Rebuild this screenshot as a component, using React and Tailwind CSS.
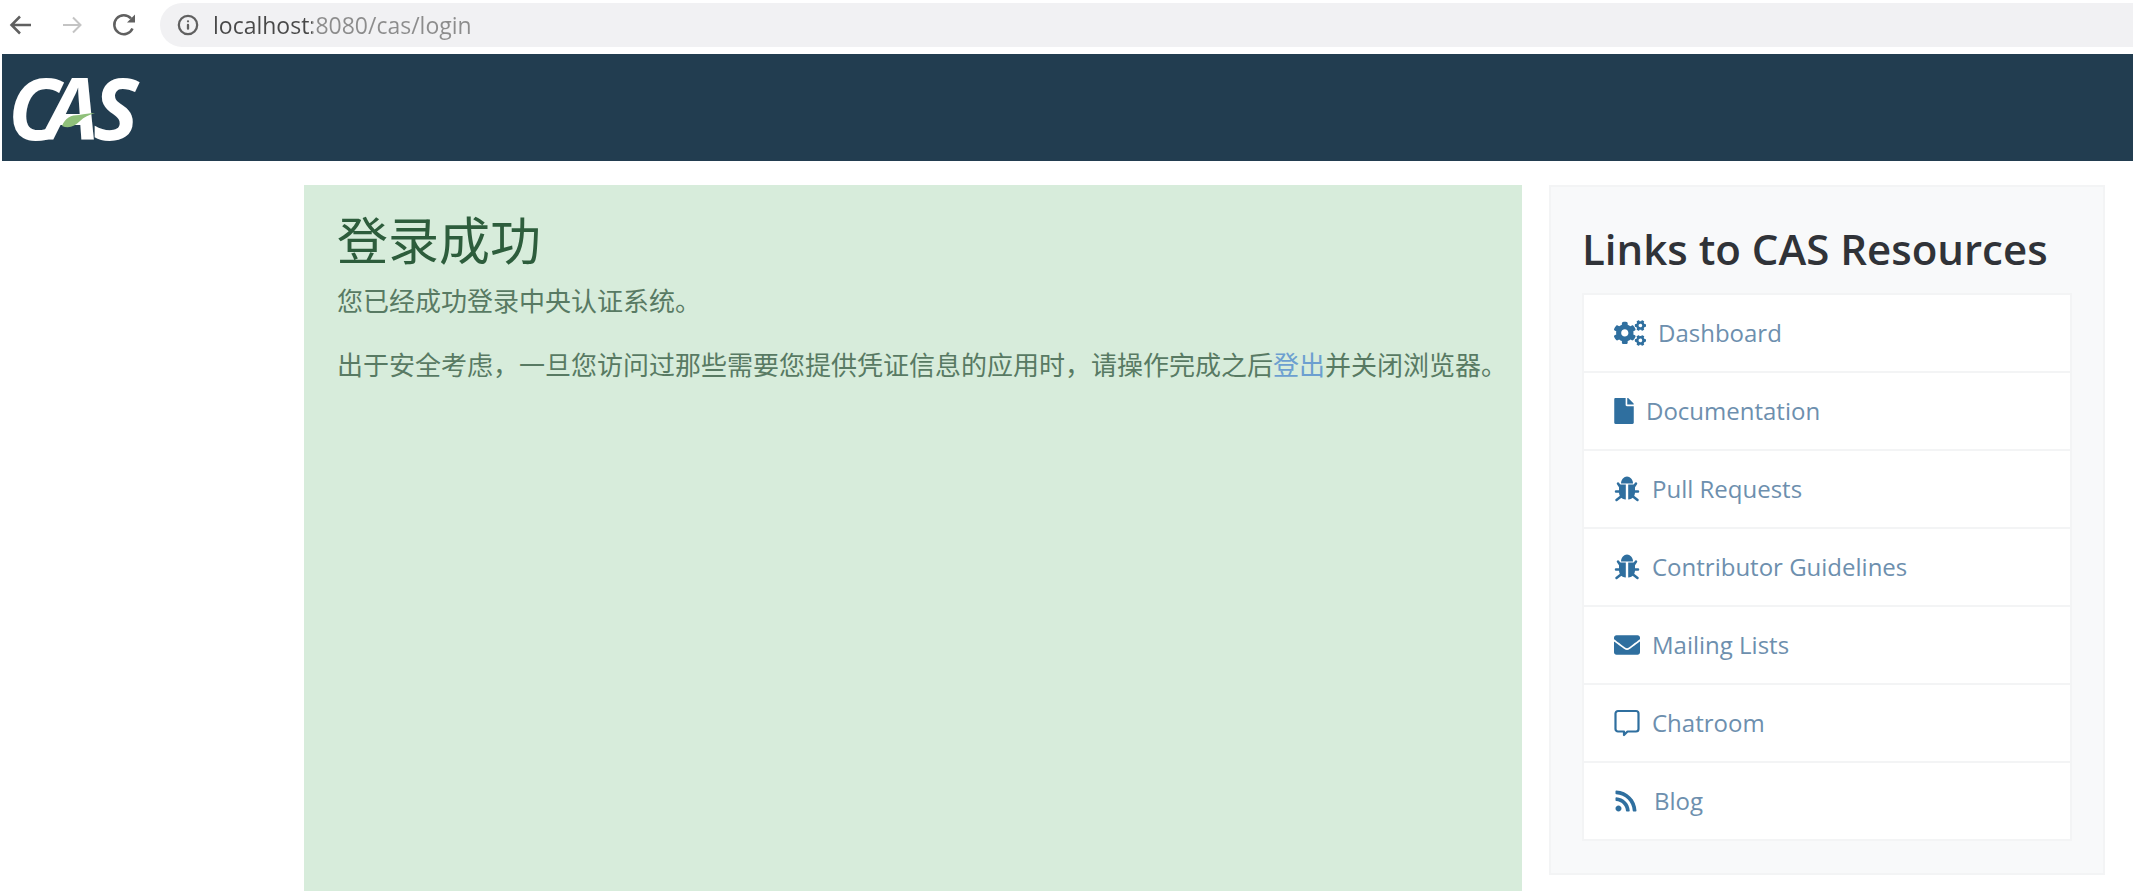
import { FaCogs, FaFile, FaEnvelope, FaRss } from "react-icons/fa";
import { Info } from "lucide-react";

function BugIcon({ className }) {
  return (
    <svg viewBox="0 0 26 26" className={className} aria-hidden="true">
      <path d="M7 7.500C7 3.500 10 0.500 13 0.500s6 3 6 7z" fill="currentColor" />
      <path d="M5 8.500H11.800v15C7 23 5 20 5 16zM14.200 8.500H21V16c0 4-2 7-6.800 7.500z" fill="currentColor" />
      <g fill="none" stroke="currentColor" strokeWidth="2.500" strokeLinecap="round">
        <path d="M6 10.500 4 7.500M20 10.500 22 7.500M6 15.500H2M20 15.500h4M7 20.500l-4.500 3.500M19 20.500l4.500 3.500" />
      </g>
    </svg>
  );
}

function ChatIcon({ className }) {
  return (
    <svg viewBox="0 0 26 28" className={className} aria-hidden="true">
      <path
        d="M4 2h18a2.500 2.500 0 0 1 2.500 2.500V20a2.500 2.500 0 0 1-2.500 2.500h-8.500L10 26v-3.500H4A2.500 2.500 0 0 1 1.500 20V4.500A2.500 2.500 0 0 1 4 2z"
        fill="none"
        stroke="currentColor"
        strokeWidth="2.200"
        strokeLinejoin="round"
      />
    </svg>
  );
}

const links = [
  { label: "Dashboard", Icon: FaCogs, size: "h-8 w-8", gap: "gap-3" },
  { label: "Documentation", Icon: FaFile, size: "h-[26px] w-5", gap: "gap-3" },
  { label: "Pull Requests", Icon: BugIcon, size: "h-[26px] w-[26px]", gap: "gap-3" },
  { label: "Contributor Guidelines", Icon: BugIcon, size: "h-[26px] w-[26px]", gap: "gap-3" },
  { label: "Mailing Lists", Icon: FaEnvelope, size: "h-[26px] w-[26px]", gap: "gap-3" },
  { label: "Chatroom", Icon: ChatIcon, size: "h-7 w-[26px]", gap: "gap-3" },
  { label: "Blog", Icon: FaRss, size: "h-6 w-6", gap: "gap-4" },
];

function BrowserBar() {
  return (
    <div className="flex h-[54px] items-center bg-white pb-1 pl-2 text-[#606060]">
      <button type="button" aria-label="Back" className="flex w-[52px] shrink-0 justify-start">
        <svg viewBox="0 0 24 24" className="h-6 w-6" fill="none" stroke="currentColor" strokeWidth="2.500">
          <path d="M23 12H4M12 3.500 3.500 12l8.500 8.500" />
        </svg>
      </button>
      <button type="button" aria-label="Forward" className="flex w-[52px] shrink-0 justify-start text-[#c4c4c4]">
        <svg viewBox="0 0 24 24" className="h-6 w-6" fill="none" stroke="currentColor" strokeWidth="2">
          <path d="M3 12h17M13 4.500l7.500 7.500-7.500 7.500" />
        </svg>
      </button>
      <button type="button" aria-label="Reload" className="flex w-12 shrink-0 justify-start">
        <svg viewBox="0 0 24 24" className="h-6 w-6" fill="none" stroke="currentColor" strokeWidth="2.500">
          <path d="M20.500 15.500A9.500 9.500 0 1 1 19 5.500" />
          <path d="M23 1.500v8h-8z" fill="currentColor" stroke="none" />
        </svg>
      </button>
      <div className="flex h-11 flex-1 items-center gap-[14px] rounded-l-full bg-[#f1f1f3] pl-[17px]">
        <Info className="h-[22px] w-[22px] shrink-0" strokeWidth={2.5} aria-hidden="true" />
        <input
          type="text"
          aria-label="Address"
          defaultValue="localhost:8080/cas/login"
          className="min-w-0 flex-1 bg-[linear-gradient(90deg,#484848_99px,#8c8c8c_99px)] bg-clip-text font-['Open_Sans',sans-serif] text-[23px] text-transparent outline-none"
        />
      </div>
    </div>
  );
}

function Logo() {
  return (
    <svg viewBox="0 0 150 107" className="h-[107px] w-[150px]" role="img" aria-label="CAS">
      <text
        x="-2 35 83"
        y="86"
        fill="#fff"
        fontFamily="'Open Sans', sans-serif"
        fontSize="86"
        fontWeight="700"
        fontStyle="italic"
      >
        CAS
      </text>
      <path d="M52 72c3-8 9-11 17-11 6-1 10-2 16-2-6 2-11 4-15 8-5 5-11 8-18 5z" fill="#8fc07a" />
    </svg>
  );
}

export default function App() {
  return (
    <div className="flex min-h-screen flex-col bg-white font-['Open_Sans','Noto_Sans_CJK_SC',sans-serif]">
      <BrowserBar />
      <header className="ml-0.5 flex h-[107px] items-center bg-[#223d50] pl-2">
        <Logo />
      </header>
      <main className="flex flex-1 items-stretch gap-[27px] pt-6 pr-7 pl-[304px]">
        <section className="flex-1 bg-[#d7ecdb] pt-[22px] pl-[33px] font-['Noto_Sans_CJK_SC',sans-serif] text-[#587a63]">
          <h1 className="text-[51px] leading-[62px] text-[#2d5d3c]">登录成功</h1>
          <p className="mt-3 text-[26px] leading-[38px]">您已经成功登录中央认证系统。</p>
          <p className="mt-[26px] text-[26px] leading-[38px]">
            出于安全考虑，一旦您访问过那些需要您提供凭证信息的应用时，请操作完成之后
            <a href="#logout" className="text-[#6c9fd0]">登出</a>
            并关闭浏览器。
          </p>
        </section>
        <aside className="w-[556px] shrink-0 self-start border-2 border-[#f3f4f5] bg-[#f8f9fa] px-[31px] pt-8 pb-8">
          <h2 className="text-[42px] leading-[60px] font-semibold whitespace-nowrap text-[#303338]">
            Links to CAS Resources
          </h2>
          <ul className="mt-[14px] divide-y-2 divide-[#f3f4f5] border-2 border-[#f3f4f5] bg-white">
            {links.map(({ label, Icon, size, gap }) => (
              <li key={label}>
                <a href="#" className={`flex h-[76px] items-center pl-[30px] text-2xl text-[#6d8fae] ${gap}`}>
                  <Icon className={`shrink-0 text-[#2f6f9f] ${size}`} />
                  {label}
                </a>
              </li>
            ))}
          </ul>
        </aside>
      </main>
    </div>
  );
}
